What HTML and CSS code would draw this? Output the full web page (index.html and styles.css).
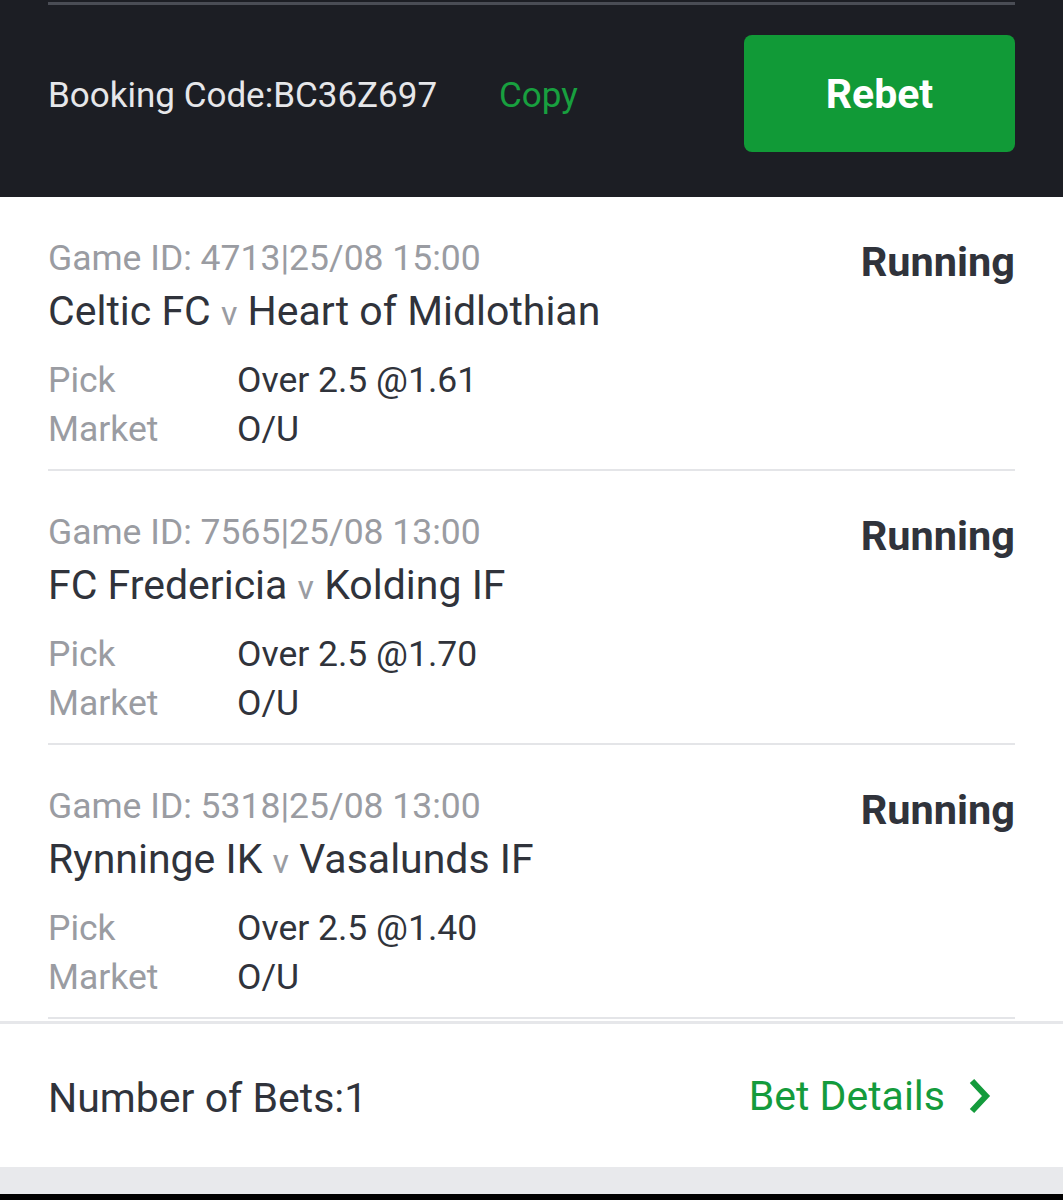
FILE: index.html
```html
<!DOCTYPE html>
<html lang="en">
<head>
    <meta charset="UTF-8">
    <meta name="viewport" content="width=device-width, initial-scale=1.0">
    <title>Bet</title>
    <link rel="stylesheet" href="styles.css">
</head>
<body>
    <div class="cabecera">
        <div class="lineaTop"></div>
        <div class="codigo">
            <span class="booking">Booking Code:BC36Z697</span>
            <span class="copy">Copy</span>
            <button class="rebet">Rebet</button>
        </div>
    </div>

    <div class="lista">
        <div class="juego">
            <div class="fila">
                <div>
                    <div class="gameId">Game ID: 4713|25/08 15:00</div>
                    <div class="equipos">Celtic FC <span class="vs">v</span> Heart of Midlothian</div>
                </div>
                <div class="estado">Running</div>
            </div>
            <div class="detalle">
                <span class="etiqueta">Pick</span><span class="valor">Over 2.5 @1.61</span>
                <span class="etiqueta">Market</span><span class="valor">O/U</span>
            </div>
        </div>

        <div class="juego">
            <div class="fila">
                <div>
                    <div class="gameId">Game ID: 7565|25/08 13:00</div>
                    <div class="equipos">FC Fredericia <span class="vs">v</span> Kolding IF</div>
                </div>
                <div class="estado">Running</div>
            </div>
            <div class="detalle">
                <span class="etiqueta">Pick</span><span class="valor">Over 2.5 @1.70</span>
                <span class="etiqueta">Market</span><span class="valor">O/U</span>
            </div>
        </div>

        <div class="juego">
            <div class="fila">
                <div>
                    <div class="gameId">Game ID: 5318|25/08 13:00</div>
                    <div class="equipos">Rynninge IK <span class="vs">v</span> Vasalunds IF</div>
                </div>
                <div class="estado">Running</div>
            </div>
            <div class="detalle">
                <span class="etiqueta">Pick</span><span class="valor">Over 2.5 @1.40</span>
                <span class="etiqueta">Market</span><span class="valor">O/U</span>
            </div>
        </div>
    </div>

    <div class="pie">
        <span class="numero">Number of Bets:1</span>
        <span class="detalles">Bet Details
            <svg width="26" height="40" viewBox="0 0 26 40"><path d="M5 5 L19 20 L5 35" fill="none" stroke="#149b3c" stroke-width="6"/></svg>
        </span>
    </div>
    <div class="franja"></div>
    <div class="negro"></div>
</body>
</html>
```

FILE: styles.css
```css
body {
    margin: 0;
    font-family: Roboto, "Liberation Sans", sans-serif;
    background: #ffffff;
    width: 1063px;
}

.cabecera {
    background: #1c1e24;
    height: 197px;
    padding: 2px 48px 0 48px;
    box-sizing: border-box;
}

.lineaTop {
    height: 3px;
    background: #4a4d55;
}

.codigo {
    display: flex;
    align-items: center;
    height: 117px;
    margin-top: 30px;
}

.booking {
    color: #e6e7ea;
    font-size: 35px;
    margin-top: 4px;
}

.copy {
    color: #18a03f;
    font-size: 35px;
    margin-left: 62px;
    margin-top: 4px;
}

.rebet {
    margin-left: auto;
    width: 271px;
    height: 117px;
    background: #119a37;
    color: white;
    border: none;
    border-radius: 8px;
    font-family: Roboto, "Liberation Sans", sans-serif;
    font-weight: bold;
    font-size: 41px;
}

.lista {
    padding: 0 48px;
}

.juego {
    border-bottom: 2px solid #e4e5e8;
    padding-top: 37px;
    height: 274px;
    box-sizing: border-box;
}

.fila {
    display: flex;
    justify-content: space-between;
}

.gameId {
    color: #9a9ca2;
    font-size: 35.5px;
    line-height: 48px;
}

.equipos {
    color: #30333b;
    font-size: 41px;
    line-height: 58px;
}

.vs {
    color: #9a9ca2;
    font-size: 34px;
}

.estado {
    color: #30333b;
    font-weight: bold;
    font-size: 41.5px;
    line-height: 52px;
    margin-top: 2px;
}

.detalle {
    display: grid;
    grid-template-columns: 189px auto;
    margin-top: 14px;
    font-size: 35.5px;
    line-height: 49px;
}

.etiqueta {
    color: #9a9ca2;
}

.valor {
    color: #30333b;
}

.pie {
    border-top: 3px solid #e6e7ea;
    display: flex;
    justify-content: space-between;
    align-items: center;
    height: 146px;
    padding: 0 70px 0 48px;
    box-sizing: border-box;
    margin-top: 2px;
}

.numero {
    color: #30333b;
    font-size: 41px;
    margin-top: 4px;
}

.detalles {
    color: #149b3c;
    font-size: 41px;
    display: flex;
    align-items: center;
    gap: 22px;
}

.franja {
    height: 27px;
    background: #e8e9ec;
}

.negro {
    height: 10px;
    background: #000000;
}
```
